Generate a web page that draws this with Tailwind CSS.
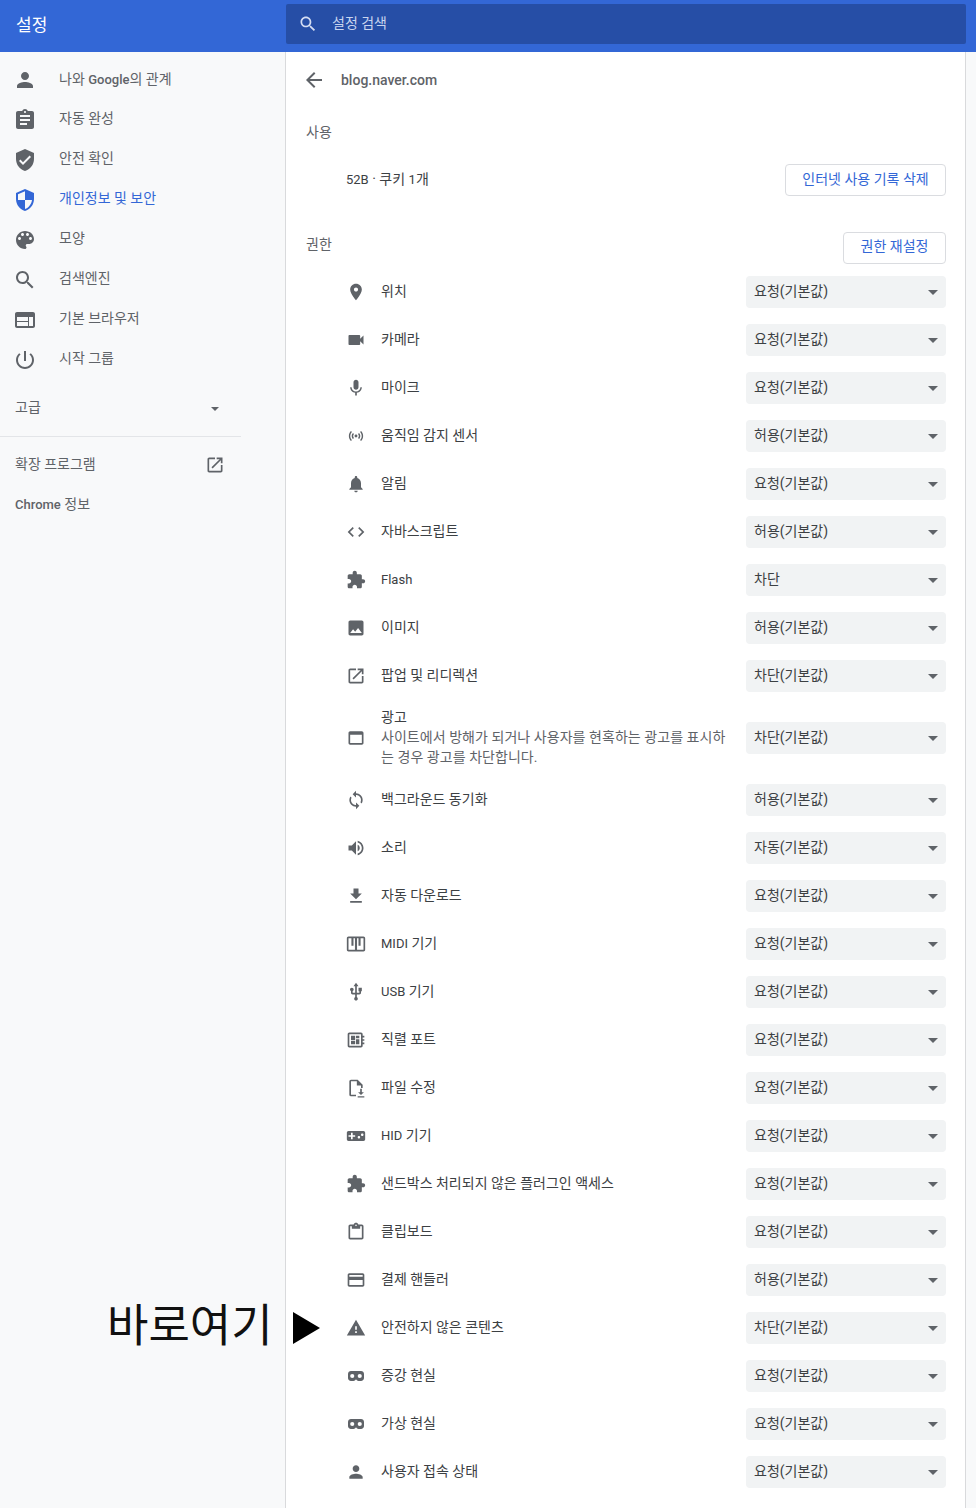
<!DOCTYPE html>
<html lang="ko">
  <head>
    <meta charset="UTF-8" />
    <meta name="viewport" content="width=device-width, initial-scale=1.0" />
    <title>설정</title>
    <script src="https://cdn.jsdelivr.net/npm/@tailwindcss/browser@4"></script>
  </head>
  <body class="relative h-[1508px] w-[976px] overflow-hidden bg-[#f8f9fa] text-[14px] text-[#3c4043] [font-family:Roboto,'Noto_Sans_CJK_KR',sans-serif]">
    <svg class="hidden">
      <symbol id="person" viewBox="0 0 24 24"><path d="M12 12c2.21 0 4-1.79 4-4s-1.79-4-4-4-4 1.79-4 4 1.79 4 4 4zm0 2c-2.67 0-8 1.34-8 4v2h16v-2c0-2.66-5.33-4-8-4z"/></symbol>
      <symbol id="search" viewBox="0 0 24 24"><path d="M15.5 14h-.79l-.28-.27C15.41 12.59 16 11.11 16 9.5 16 5.91 13.09 3 9.5 3S3 5.91 3 9.5 5.91 16 9.5 16c1.61 0 3.09-.59 4.23-1.57l.27.28v.79l5 4.99L20.49 19l-4.99-5zm-6 0C7.01 14 5 11.99 5 9.5S7.01 5 9.5 5 14 7.01 14 9.5 11.99 14 9.5 14z"/></symbol>
      <symbol id="launch" viewBox="0 0 24 24"><path d="M19 19H5V5h7V3H5c-1.11 0-2 .9-2 2v14c0 1.1.89 2 2 2h14c1.1 0 2-.9 2-2v-7h-2v7zM14 3v2h3.59l-9.83 9.83 1.41 1.41L19 6.41V10h2V3h-7z"/></symbol>
      <symbol id="extension" viewBox="0 0 24 24"><path d="M20.5 11H19V7c0-1.1-.9-2-2-2h-4V3.5C13 2.12 11.88 1 10.5 1S8 2.12 8 3.5V5H4c-1.1 0-1.99.9-1.99 2v3.8H3.5c1.49 0 2.7 1.21 2.7 2.7s-1.21 2.7-2.7 2.7H2V20c0 1.1.9 2 2 2h3.8v-1.5c0-1.49 1.21-2.7 2.7-2.7 1.49 0 2.7 1.21 2.7 2.7V22H17c1.1 0 2-.9 2-2v-4h1.5c1.38 0 2.5-1.12 2.5-2.5S21.88 11 20.5 11z"/></symbol>
      <symbol id="vr" viewBox="0 0 24 24"><path fill-rule="evenodd" d="M6 6h12c2 0 3.6 1.6 3.6 3.6v4.8c0 2-1.6 3.6-3.6 3.6h-3c-1.3 0-2-.8-3-2-1 1.2-1.7 2-3 2H6c-2 0-3.6-1.6-3.6-3.6V9.6C2.4 7.6 4 6 6 6zM7.5 9.5a2.5 2.5 0 1 0 0 5 2.5 2.5 0 1 0 0-5zM16.5 9.5a2.5 2.5 0 1 0 0 5 2.5 2.5 0 1 0 0-5z"/></symbol>
    </svg>

    <!-- header -->
    <header class="flex h-[52px] bg-[#3367d6]">
      <div class="flex h-full w-[286px] items-center pl-[16px] text-[17px] text-white">설정</div>
      <div class="mt-[4px] flex h-[40px] w-[680px] items-center rounded-[2px] bg-[#264ea6] pl-[12px] text-[14px] text-[#c9d5ef]">
        <svg class="mr-[14px] h-5 w-5 fill-[#d5def3]"><use href="#search"/></svg>
        <span class="pb-[1px]">설정 검색</span>
      </div>
    </header>

    <div class="flex h-[1456px]">
      <!-- sidebar -->
      <nav class="w-[285px] shrink-0 pt-[8px] text-[#5f6368]">
        <a class="flex h-10 items-center pl-[13px]"><svg class="mr-[22px] h-6 w-6 fill-[#5f6368]"><use href="#person"/></svg><span class="pb-[1px]">나와 <span class="text-[13px] font-medium">Google</span>의 관계</span></a>
        <a class="flex h-10 items-center pl-[13px]"><svg class="mr-[22px] h-6 w-6 fill-[#5f6368]" viewBox="0 0 24 24"><path d="M19 3h-4.18C14.4 1.84 13.3 1 12 1c-1.3 0-2.4.84-2.82 2H5c-1.1 0-2 .9-2 2v14c0 1.1.9 2 2 2h14c1.1 0 2-.9 2-2V5c0-1.1-.9-2-2-2zm-7 0c.55 0 1 .45 1 1s-.45 1-1 1-1-.45-1-1 .45-1 1-1zm2 14H7v-2h7v2zm3-4H7v-2h10v2zm0-4H7V7h10v2z"/></svg><span class="pb-[3px]">자동 완성</span></a>
        <a class="flex h-10 items-center pl-[13px]"><svg class="mr-[22px] h-6 w-6 fill-[#5f6368]" viewBox="0 0 24 24"><path d="M12 1L3 5v6c0 5.55 3.84 10.74 9 12 5.16-1.26 9-6.45 9-12V5l-9-4zm-2 16l-4-4 1.41-1.41L10 14.17l6.59-6.59L18 9l-8 8z"/></svg><span class="pb-[3px]">안전 확인</span></a>
        <a class="flex h-10 items-center pl-[13px] text-[#3367d6]"><svg class="mr-[22px] h-6 w-6 fill-[#3367d6]" viewBox="0 0 24 24"><path d="M12 1L3 5v6c0 5.55 3.84 10.74 9 12 5.16-1.26 9-6.45 9-12V5l-9-4zm0 10.99h7c-.53 4.12-3.28 7.79-7 8.94V12H5V6.3l7-3.11v8.8z"/></svg><span class="pb-[3px]">개인정보 및 보안</span></a>
        <a class="flex h-10 items-center pl-[13px]"><svg class="mr-[22px] h-6 w-6 fill-[#5f6368]" viewBox="0 0 24 24"><path d="M12 3c-4.97 0-9 4.03-9 9s4.03 9 9 9c.83 0 1.5-.67 1.5-1.5 0-.39-.15-.74-.39-1.01-.23-.26-.38-.61-.38-.99 0-.83.67-1.5 1.5-1.5H16c2.76 0 5-2.24 5-5 0-4.42-4.03-8-9-8zm-5.5 9c-.83 0-1.5-.67-1.5-1.5S5.67 9 6.5 9 8 9.67 8 10.5 7.33 12 6.5 12zm3-4C8.67 8 8 7.33 8 6.5S8.67 5 9.5 5s1.5.67 1.5 1.5S10.33 8 9.5 8zm5 0c-.83 0-1.5-.67-1.5-1.5S13.67 5 14.5 5s1.5.67 1.5 1.5S15.33 8 14.5 8zm3 4c-.83 0-1.5-.67-1.5-1.5S16.67 9 17.5 9s1.5.67 1.5 1.5-.67 1.5-1.5 1.5z"/></svg><span class="pb-[3px]">모양</span></a>
        <a class="flex h-10 items-center pl-[13px]"><svg class="mr-[22px] h-6 w-6 fill-[#5f6368]"><use href="#search"/></svg><span class="pb-[3px]">검색엔진</span></a>
        <a class="flex h-10 items-center pl-[13px]"><svg class="mr-[22px] h-6 w-6 fill-[#5f6368]" viewBox="0 0 24 24"><path d="M20 4H4c-1.1 0-1.99.9-1.99 2L2 18c0 1.1.9 2 2 2h16c1.1 0 2-.9 2-2V6c0-1.1-.9-2-2-2zm-5 14H4v-4h11v4zm0-5H4V9h11v4zm5 5h-4V9h4v9z"/></svg><span class="pb-[3px]">기본 브라우저</span></a>
        <a class="flex h-10 items-center pl-[13px]"><svg class="mr-[22px] h-6 w-6 fill-[#5f6368]" viewBox="0 0 24 24"><path d="M13 3h-2v10h2V3zm4.83 2.17l-1.42 1.42C17.99 7.86 19 9.81 19 12c0 3.87-3.13 7-7 7s-7-3.13-7-7c0-2.19 1.01-4.14 2.58-5.42L6.17 5.17C4.23 6.82 3 9.26 3 12c0 4.97 4.03 9 9 9s9-4.03 9-9c0-2.74-1.23-5.18-3.17-6.83z"/></svg><span class="pb-[3px]">시작 그룹</span></a>
        <div class="mt-[7px] flex h-10 w-[241px] items-center justify-between pl-[15px] pr-[22px]"><span>고급</span><span class="mt-[3px] h-0 w-0 border-x-[4px] border-t-[4px] border-x-transparent border-t-[#5f6368]"></span></div>
        <div class="mt-[9px] h-px w-[241px] bg-[#e3e5e8]"></div>
        <a class="mt-[8px] flex h-10 w-[241px] items-center justify-between pl-[15px] pr-[16px]"><span class="pb-[1px]">확장 프로그램</span><svg class="h-5 w-5 fill-[#5f6368]"><use href="#launch"/></svg></a>
        <a class="flex h-[39px] items-center pl-[15px]"><span><span class="text-[13px] font-medium">Chrome</span> 정보</span></a>
      </nav>

      <!-- content -->
      <main class="h-full w-[681px] border-x border-[#d9dadc] bg-white pl-[20px] pr-[19px]">
        <div class="flex h-14 items-center">
          <svg class="ml-[-4px] mr-[15px] h-6 w-6 fill-[#5f6368]" viewBox="0 0 24 24"><path d="M20 11H7.83l5.59-5.59L12 4l-8 8 8 8 1.41-1.41L7.83 13H20v-2z"/></svg>
          <h1 class="text-[14px] font-medium text-[#5f6368]">blog.naver.com</h1>
        </div>
        <h2 class="flex h-12 items-center text-[#5f6368]">사용</h2>
        <div class="flex h-12 items-center pl-[40px]">
          <span class="pb-[2px]"><span class="text-[13px]">52B</span> · 쿠키 <span class="text-[13px]">1</span>개</span>
          <button class="ml-auto h-8 w-[161px] rounded border border-[#dadce0] pb-[2px] text-[#3367d6]">인터넷 사용 기록 삭제</button>
        </div>
        <div class="flex h-16 items-end justify-between pb-1">
          <h2 class="pb-[9px] text-[#5f6368]">권한</h2>
          <button class="h-8 w-[103px] rounded border border-[#dadce0] pb-[3px] text-[#3367d6]">권한 재설정</button>
        </div>

        <ul class="pl-[40px]">
          <li class="flex h-12 items-center"><svg class="mr-[15px] h-5 w-5 shrink-0 fill-[#5f6368]" viewBox="0 0 24 24"><path d="M12 2C8.13 2 5 5.13 5 9c0 5.25 7 13 7 13s7-7.75 7-13c0-3.87-3.13-7-7-7zm0 9.5c-1.38 0-2.5-1.12-2.5-2.5s1.12-2.5 2.5-2.5 2.5 1.12 2.5 2.5-1.12 2.5-2.5 2.5z"/></svg><span class="pb-[1px]">위치</span>
            <div class="ml-auto flex h-8 w-[200px] shrink-0 items-center justify-between rounded bg-[#f1f3f4] pl-2 pr-2"><span class="pb-[1px]">요청(기본값)</span><span class="h-0 w-0 border-x-[5px] border-t-[5px] border-x-transparent border-t-[#5f6368]"></span></div></li>
          <li class="flex h-12 items-center"><svg class="mr-[15px] h-5 w-5 shrink-0 fill-[#5f6368]" viewBox="0 0 24 24"><path d="M17 10.5V7c0-.55-.45-1-1-1H4c-.55 0-1 .45-1 1v10c0 .55.45 1 1 1h12c.55 0 1-.45 1-1v-3.5l4 4v-11l-4 4z"/></svg><span class="pb-[1px]">카메라</span>
            <div class="ml-auto flex h-8 w-[200px] shrink-0 items-center justify-between rounded bg-[#f1f3f4] pl-2 pr-2"><span class="pb-[1px]">요청(기본값)</span><span class="h-0 w-0 border-x-[5px] border-t-[5px] border-x-transparent border-t-[#5f6368]"></span></div></li>
          <li class="flex h-12 items-center"><svg class="mr-[15px] h-5 w-5 shrink-0 fill-[#5f6368]" viewBox="0 0 24 24"><path d="M12 14c1.66 0 2.99-1.34 2.99-3L15 5c0-1.66-1.34-3-3-3S9 3.34 9 5v6c0 1.66 1.34 3 3 3zm5.3-3c0 3-2.54 5.1-5.3 5.1S6.7 14 6.7 11H5c0 3.41 2.72 6.23 6 6.72V21h2v-3.28c3.28-.48 6-3.3 6-6.72h-1.7z"/></svg><span class="pb-[1px]">마이크</span>
            <div class="ml-auto flex h-8 w-[200px] shrink-0 items-center justify-between rounded bg-[#f1f3f4] pl-2 pr-2"><span class="pb-[1px]">요청(기본값)</span><span class="h-0 w-0 border-x-[5px] border-t-[5px] border-x-transparent border-t-[#5f6368]"></span></div></li>
          <li class="flex h-12 items-center"><svg class="mr-[15px] h-5 w-5 shrink-0 fill-[#5f6368]" viewBox="-2 -2 28 28"><path d="M7.76 16.24C6.67 15.16 6 13.66 6 12s.67-3.16 1.76-4.24l1.42 1.42C8.45 9.9 8 10.9 8 12c0 1.1.45 2.1 1.17 2.83l-1.41 1.41zm8.48 0C17.33 15.16 18 13.66 18 12s-.67-3.16-1.76-4.24l-1.42 1.42C15.55 9.9 16 10.9 16 12c0 1.1-.45 2.1-1.17 2.83l1.41 1.41zM12 10c-1.1 0-2 .9-2 2s.9 2 2 2 2-.9 2-2-.9-2-2-2zm8 2c0 2.21-.9 4.21-2.35 5.65l1.42 1.42C20.88 17.26 22 14.76 22 12s-1.12-5.26-2.93-7.07l-1.42 1.42C19.1 7.79 20 9.79 20 12zM6.35 6.35L4.93 4.93C3.12 6.74 2 9.24 2 12s1.12 5.26 2.93 7.07l1.42-1.42C4.9 16.21 4 14.21 4 12s.9-4.21 2.35-5.65z"/></svg><span class="pb-[1px]">움직임 감지 센서</span>
            <div class="ml-auto flex h-8 w-[200px] shrink-0 items-center justify-between rounded bg-[#f1f3f4] pl-2 pr-2"><span class="pb-[1px]">허용(기본값)</span><span class="h-0 w-0 border-x-[5px] border-t-[5px] border-x-transparent border-t-[#5f6368]"></span></div></li>
          <li class="flex h-12 items-center"><svg class="mr-[15px] h-5 w-5 shrink-0 fill-[#5f6368]" viewBox="0 0 24 24"><path d="M12 22c1.1 0 2-.9 2-2h-4c0 1.1.89 2 2 2zm6-6v-5c0-3.07-1.64-5.64-4.5-6.32V4c0-.83-.67-1.5-1.5-1.5s-1.5.67-1.5 1.5v.68C7.63 5.36 6 7.92 6 11v5l-2 2v1h16v-1l-2-2z"/></svg><span class="pb-[1px]">알림</span>
            <div class="ml-auto flex h-8 w-[200px] shrink-0 items-center justify-between rounded bg-[#f1f3f4] pl-2 pr-2"><span class="pb-[1px]">요청(기본값)</span><span class="h-0 w-0 border-x-[5px] border-t-[5px] border-x-transparent border-t-[#5f6368]"></span></div></li>
          <li class="flex h-12 items-center"><svg class="mr-[15px] h-5 w-5 shrink-0 fill-[#5f6368]" viewBox="0 0 24 24"><path d="M9.4 16.6L4.8 12l4.6-4.6L8 6l-6 6 6 6 1.4-1.4zm5.2 0l4.6-4.6-4.6-4.6L16 6l6 6-6 6-1.4-1.4z"/></svg><span class="pb-[1px]">자바스크립트</span>
            <div class="ml-auto flex h-8 w-[200px] shrink-0 items-center justify-between rounded bg-[#f1f3f4] pl-2 pr-2"><span class="pb-[1px]">허용(기본값)</span><span class="h-0 w-0 border-x-[5px] border-t-[5px] border-x-transparent border-t-[#5f6368]"></span></div></li>
          <li class="flex h-12 items-center"><svg class="mr-[15px] h-5 w-5 shrink-0 fill-[#5f6368]"><use href="#extension"/></svg><span class="text-[13px]">Flash</span>
            <div class="ml-auto flex h-8 w-[200px] shrink-0 items-center justify-between rounded bg-[#f1f3f4] pl-2 pr-2"><span class="pb-[1px]">차단</span><span class="h-0 w-0 border-x-[5px] border-t-[5px] border-x-transparent border-t-[#5f6368]"></span></div></li>
          <li class="flex h-12 items-center"><svg class="mr-[15px] h-5 w-5 shrink-0 fill-[#5f6368]" viewBox="0 0 24 24"><path d="M21 19V5c0-1.1-.9-2-2-2H5c-1.1 0-2 .9-2 2v14c0 1.1.9 2 2 2h14c1.1 0 2-.9 2-2zM8.5 13.5l2.5 3.01L14.5 12l4.5 6H5l3.5-4.5z"/></svg><span class="pb-[1px]">이미지</span>
            <div class="ml-auto flex h-8 w-[200px] shrink-0 items-center justify-between rounded bg-[#f1f3f4] pl-2 pr-2"><span class="pb-[1px]">허용(기본값)</span><span class="h-0 w-0 border-x-[5px] border-t-[5px] border-x-transparent border-t-[#5f6368]"></span></div></li>
          <li class="flex h-12 items-center"><svg class="mr-[15px] h-5 w-5 shrink-0 fill-[#5f6368]"><use href="#launch"/></svg><span class="pb-[1px]">팝업 및 리디렉션</span>
            <div class="ml-auto flex h-8 w-[200px] shrink-0 items-center justify-between rounded bg-[#f1f3f4] pl-2 pr-2"><span class="pb-[1px]">차단(기본값)</span><span class="h-0 w-0 border-x-[5px] border-t-[5px] border-x-transparent border-t-[#5f6368]"></span></div></li>
          <li class="flex h-[76px] items-center"><svg class="mr-[15px] h-5 w-5 shrink-0 fill-[#5f6368]" viewBox="0 0 24 24"><path d="M19 4H5c-1.11 0-2 .9-2 2v12c0 1.1.89 2 2 2h14c1.1 0 2-.9 2-2V6c0-1.1-.89-2-2-2zm0 14H5V8h14v10z"/></svg>
            <div class="w-[350px] pb-[2px] leading-[20px]"><p>광고</p><p class="tracking-[0.05px] text-[#5f6368]">사이트에서 방해가 되거나 사용자를 현혹하는 광고를 표시하<br />는 경우 광고를 차단합니다.</p></div>
            <div class="ml-auto flex h-8 w-[200px] shrink-0 items-center justify-between rounded bg-[#f1f3f4] pl-2 pr-2"><span class="pb-[1px]">차단(기본값)</span><span class="h-0 w-0 border-x-[5px] border-t-[5px] border-x-transparent border-t-[#5f6368]"></span></div></li>
          <li class="flex h-12 items-center"><svg class="mr-[15px] h-5 w-5 shrink-0 fill-[#5f6368]" viewBox="0 0 24 24"><path d="M12 4V1L8 5l4 4V6c3.31 0 6 2.69 6 6 0 1.01-.25 1.97-.7 2.8l1.46 1.46C19.54 15.03 20 13.57 20 12c0-4.42-3.58-8-8-8zm0 14c-3.31 0-6-2.69-6-6 0-1.01.25-1.97.7-2.8L5.24 7.74C4.46 8.97 4 10.43 4 12c0 4.42 3.58 8 8 8v3l4-4-4-4v3z"/></svg><span class="pb-[1px]">백그라운드 동기화</span>
            <div class="ml-auto flex h-8 w-[200px] shrink-0 items-center justify-between rounded bg-[#f1f3f4] pl-2 pr-2"><span class="pb-[1px]">허용(기본값)</span><span class="h-0 w-0 border-x-[5px] border-t-[5px] border-x-transparent border-t-[#5f6368]"></span></div></li>
          <li class="flex h-12 items-center"><svg class="mr-[15px] h-5 w-5 shrink-0 fill-[#5f6368]" viewBox="0 0 24 24"><path d="M3 9v6h4l5 5V4L7 9H3zm13.5 3c0-1.77-1.02-3.29-2.5-4.03v8.05c1.48-.73 2.5-2.25 2.5-4.02zM14 3.23v2.06c2.89.86 5 3.54 5 6.71s-2.11 5.85-5 6.71v2.06c4.01-.91 7-4.49 7-8.77s-2.99-7.86-7-8.77z"/></svg><span class="pb-[1px]">소리</span>
            <div class="ml-auto flex h-8 w-[200px] shrink-0 items-center justify-between rounded bg-[#f1f3f4] pl-2 pr-2"><span class="pb-[1px]">자동(기본값)</span><span class="h-0 w-0 border-x-[5px] border-t-[5px] border-x-transparent border-t-[#5f6368]"></span></div></li>
          <li class="flex h-12 items-center"><svg class="mr-[15px] h-5 w-5 shrink-0 fill-[#5f6368]" viewBox="0 0 24 24"><path d="M19 9h-4V3H9v6H5l7 7 7-7zM5 18v2h14v-2H5z"/></svg><span class="pb-[1px]">자동 다운로드</span>
            <div class="ml-auto flex h-8 w-[200px] shrink-0 items-center justify-between rounded bg-[#f1f3f4] pl-2 pr-2"><span class="pb-[1px]">요청(기본값)</span><span class="h-0 w-0 border-x-[5px] border-t-[5px] border-x-transparent border-t-[#5f6368]"></span></div></li>
          <li class="flex h-12 items-center"><svg class="mr-[15px] h-5 w-5 shrink-0 fill-[#5f6368]" viewBox="0 0 24 24"><path d="M21 3H3c-1.1 0-2 .9-2 2v14c0 1.1.9 2 2 2h18c1.1 0 2-.9 2-2V5c0-1.1-.9-2-2-2zm0 16H3V5h18v14zM6.5 5H9v9H6.5zM10.75 5h2.5v14h-2.5zM15 5h2.5v9H15z"/></svg><span class="pb-[1px]"><span class="text-[13px]">MIDI</span> 기기</span>
            <div class="ml-auto flex h-8 w-[200px] shrink-0 items-center justify-between rounded bg-[#f1f3f4] pl-2 pr-2"><span class="pb-[1px]">요청(기본값)</span><span class="h-0 w-0 border-x-[5px] border-t-[5px] border-x-transparent border-t-[#5f6368]"></span></div></li>
          <li class="flex h-12 items-center"><svg class="mr-[15px] h-5 w-5 shrink-0 fill-[#5f6368]" viewBox="0 0 24 24"><path d="M15 7v4h1v2h-3V5h2l-3-4-3 4h2v8H8v-2.07c.7-.37 1.2-1.08 1.2-1.93 0-1.21-.99-2.2-2.2-2.2-1.21 0-2.2.99-2.2 2.2 0 .85.5 1.56 1.2 1.93V13c0 1.11.89 2 2 2h3v3.05c-.71.37-1.2 1.1-1.2 1.95 0 1.22.99 2.2 2.2 2.2 1.21 0 2.2-.98 2.2-2.2 0-.85-.49-1.58-1.2-1.95V15h3c1.11 0 2-.89 2-2v-2h1V7h-4z"/></svg><span class="pb-[1px]"><span class="text-[13px]">USB</span> 기기</span>
            <div class="ml-auto flex h-8 w-[200px] shrink-0 items-center justify-between rounded bg-[#f1f3f4] pl-2 pr-2"><span class="pb-[1px]">요청(기본값)</span><span class="h-0 w-0 border-x-[5px] border-t-[5px] border-x-transparent border-t-[#5f6368]"></span></div></li>
          <li class="flex h-12 items-center"><svg class="mr-[15px] h-5 w-5 shrink-0 fill-[#5f6368]" viewBox="0 0 24 24"><path d="M22 9V7h-2V5c0-1.1-.9-2-2-2H4c-1.1 0-2 .9-2 2v14c0 1.1.9 2 2 2h14c1.1 0 2-.9 2-2v-2h2v-2h-2v-2h2v-2h-2V9h2zm-4 10H4V5h14v14zM6 13h5v4H6zm6-6h4v3h-4zM6 7h5v5H6zm6 4h4v6h-4z"/></svg><span class="pb-[1px]">직렬 포트</span>
            <div class="ml-auto flex h-8 w-[200px] shrink-0 items-center justify-between rounded bg-[#f1f3f4] pl-2 pr-2"><span class="pb-[1px]">요청(기본값)</span><span class="h-0 w-0 border-x-[5px] border-t-[5px] border-x-transparent border-t-[#5f6368]"></span></div></li>
          <li class="flex h-12 items-center"><svg class="mr-[15px] h-5 w-5 shrink-0 fill-[#5f6368]" viewBox="0 0 24 24"><path d="M6 2a2 2 0 0 0-2 2v16a2 2 0 0 0 2 2h6v-2H6V4h7v5h5v3h2V8l-6-6H6zM17 13h2v4h2.5L18 20.5 14.5 17H17v-4zM14 22h8v1.5h-8z"/></svg><span class="pb-[1px]">파일 수정</span>
            <div class="ml-auto flex h-8 w-[200px] shrink-0 items-center justify-between rounded bg-[#f1f3f4] pl-2 pr-2"><span class="pb-[1px]">요청(기본값)</span><span class="h-0 w-0 border-x-[5px] border-t-[5px] border-x-transparent border-t-[#5f6368]"></span></div></li>
          <li class="flex h-12 items-center"><svg class="mr-[15px] h-5 w-5 shrink-0 fill-[#5f6368]" viewBox="0 0 24 24"><path d="M21 6H3c-1.1 0-2 .9-2 2v8c0 1.1.9 2 2 2h18c1.1 0 2-.9 2-2V8c0-1.1-.9-2-2-2zm-10 7H8v3H6v-3H3v-2h3V8h2v3h3v2zm4.5 2c-.83 0-1.5-.67-1.5-1.5s.67-1.5 1.5-1.5 1.5.67 1.5 1.5-.67 1.5-1.5 1.5zm4-3c-.83 0-1.5-.67-1.5-1.5S18.67 9 19.5 9s1.5.67 1.5 1.5-.67 1.5-1.5 1.5z"/></svg><span class="pb-[1px]"><span class="text-[13px]">HID</span> 기기</span>
            <div class="ml-auto flex h-8 w-[200px] shrink-0 items-center justify-between rounded bg-[#f1f3f4] pl-2 pr-2"><span class="pb-[1px]">요청(기본값)</span><span class="h-0 w-0 border-x-[5px] border-t-[5px] border-x-transparent border-t-[#5f6368]"></span></div></li>
          <li class="flex h-12 items-center"><svg class="mr-[15px] h-5 w-5 shrink-0 fill-[#5f6368]"><use href="#extension"/></svg><span class="pb-[1px]">샌드박스 처리되지 않은 플러그인 액세스</span>
            <div class="ml-auto flex h-8 w-[200px] shrink-0 items-center justify-between rounded bg-[#f1f3f4] pl-2 pr-2"><span class="pb-[1px]">요청(기본값)</span><span class="h-0 w-0 border-x-[5px] border-t-[5px] border-x-transparent border-t-[#5f6368]"></span></div></li>
          <li class="flex h-12 items-center"><svg class="mr-[15px] h-5 w-5 shrink-0 fill-[#5f6368]" viewBox="0 0 24 24"><path d="M19 3h-4.18C14.4 1.84 13.3 1 12 1c-1.3 0-2.4.84-2.82 2H5c-1.1 0-2 .9-2 2v14c0 1.1.9 2 2 2h14c1.1 0 2-.9 2-2V5c0-1.1-.9-2-2-2zm-7 0c.55 0 1 .45 1 1s-.45 1-1 1-1-.45-1-1 .45-1 1-1zm7 16H5V5h2v3h10V5h2v14z"/></svg><span class="pb-[1px]">클립보드</span>
            <div class="ml-auto flex h-8 w-[200px] shrink-0 items-center justify-between rounded bg-[#f1f3f4] pl-2 pr-2"><span class="pb-[1px]">요청(기본값)</span><span class="h-0 w-0 border-x-[5px] border-t-[5px] border-x-transparent border-t-[#5f6368]"></span></div></li>
          <li class="flex h-12 items-center"><svg class="mr-[15px] h-5 w-5 shrink-0 fill-[#5f6368]" viewBox="0 0 24 24"><path d="M20 4H4c-1.11 0-1.99.89-1.99 2L2 18c0 1.11.89 2 2 2h16c1.11 0 2-.89 2-2V6c0-1.11-.89-2-2-2zm0 14H4v-6h16v6zm0-10H4V6h16v2z"/></svg><span class="pb-[1px]">결제 핸들러</span>
            <div class="ml-auto flex h-8 w-[200px] shrink-0 items-center justify-between rounded bg-[#f1f3f4] pl-2 pr-2"><span class="pb-[1px]">허용(기본값)</span><span class="h-0 w-0 border-x-[5px] border-t-[5px] border-x-transparent border-t-[#5f6368]"></span></div></li>
          <li class="flex h-12 items-center"><svg class="mr-[15px] h-5 w-5 shrink-0 fill-[#5f6368]" viewBox="0 0 24 24"><path d="M1 21h22L12 2 1 21zm12-3h-2v-2h2v2zm0-4h-2v-4h2v4z"/></svg><span class="pb-[1px]">안전하지 않은 콘텐츠</span>
            <div class="ml-auto flex h-8 w-[200px] shrink-0 items-center justify-between rounded bg-[#f1f3f4] pl-2 pr-2"><span class="pb-[1px]">차단(기본값)</span><span class="h-0 w-0 border-x-[5px] border-t-[5px] border-x-transparent border-t-[#5f6368]"></span></div></li>
          <li class="flex h-12 items-center"><svg class="mr-[15px] h-5 w-5 shrink-0 fill-[#5f6368]"><use href="#vr"/></svg><span class="pb-[1px]">증강 현실</span>
            <div class="ml-auto flex h-8 w-[200px] shrink-0 items-center justify-between rounded bg-[#f1f3f4] pl-2 pr-2"><span class="pb-[1px]">요청(기본값)</span><span class="h-0 w-0 border-x-[5px] border-t-[5px] border-x-transparent border-t-[#5f6368]"></span></div></li>
          <li class="flex h-12 items-center"><svg class="mr-[15px] h-5 w-5 shrink-0 fill-[#5f6368]"><use href="#vr"/></svg><span class="pb-[1px]">가상 현실</span>
            <div class="ml-auto flex h-8 w-[200px] shrink-0 items-center justify-between rounded bg-[#f1f3f4] pl-2 pr-2"><span class="pb-[1px]">요청(기본값)</span><span class="h-0 w-0 border-x-[5px] border-t-[5px] border-x-transparent border-t-[#5f6368]"></span></div></li>
          <li class="flex h-12 items-center"><svg class="mr-[15px] h-5 w-5 shrink-0 fill-[#5f6368]"><use href="#person"/></svg><span class="pb-[1px]">사용자 접속 상태</span>
            <div class="ml-auto flex h-8 w-[200px] shrink-0 items-center justify-between rounded bg-[#f1f3f4] pl-2 pr-2"><span class="pb-[1px]">요청(기본값)</span><span class="h-0 w-0 border-x-[5px] border-t-[5px] border-x-transparent border-t-[#5f6368]"></span></div></li>
        </ul>
      </main>
    </div>

    <!-- annotation drawn over the page -->
    <div class="absolute left-[107px] top-[1295px] flex items-center text-[45px] leading-[64px] text-[#111]">
      <span>바로여기</span>
      <svg class="ml-[20px] mt-[2px] h-[32px] w-[27px]" viewBox="0 0 27 32"><path d="M0 0l27 16L0 32z"/></svg>
    </div>
  </body>
</html>
